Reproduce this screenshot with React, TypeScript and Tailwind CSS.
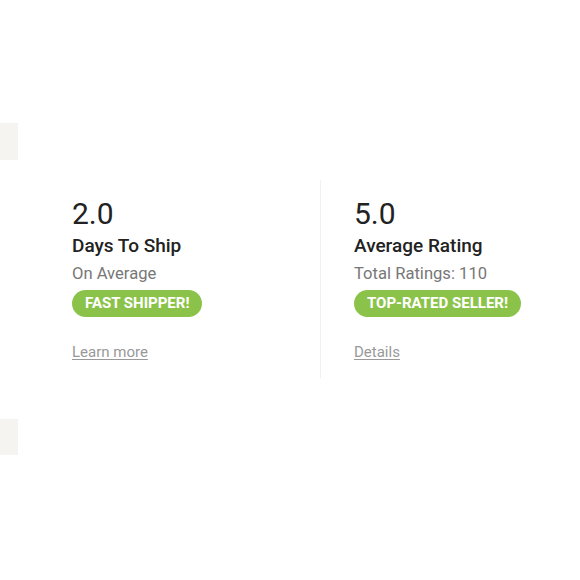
const stats = [
  {
    value: '2.0',
    title: 'Days To Ship',
    sub: 'On Average',
    badge: 'FAST SHIPPER!',
    link: 'Learn more',
  },
  {
    value: '5.0',
    title: 'Average Rating',
    sub: 'Total Ratings: 110',
    badge: 'TOP-RATED SELLER!',
    link: 'Details',
  },
]

function StatCard({ stat, divider }: { stat: (typeof stats)[number]; divider: boolean }) {
  return (
    <div
      className={
        'pt-4 pb-4 flex flex-col items-start ' +
        (divider ? 'pl-[33px] flex-1 border-l border-[#f1f1f1]' : 'pl-[34px] w-[282px] shrink-0')
      }
    >
      <div className="text-[30px] leading-[36px] text-[#222222]">{stat.value}</div>
      <div className="mt-[2px] text-[19px] leading-[24px] font-medium text-[#222222]">{stat.title}</div>
      <div className="mt-1 text-[16.6px] leading-[24px] text-[#777777]">{stat.sub}</div>
      <span className="mt-1 h-[27px] px-[13px] rounded-full bg-[#8bc34a] text-white text-[15px] font-bold leading-[27px]">
        {stat.badge}
      </span>
      <a href="#" className="mt-[25px] text-[15px] leading-[20px] text-[#999999] underline underline-offset-2">
        {stat.link}
      </a>
    </div>
  )
}

export default function App() {
  return (
    <div className="w-[580px] h-[580px] bg-white flex items-start font-['Roboto',sans-serif]">
      <div className="w-[18px] shrink-0 flex flex-col">
        <div className="mt-[123px] h-[37px] bg-[#f5f4f1]" />
        <div className="mt-[259px] h-[36px] bg-[#f5f4f1]" />
      </div>
      <div className="ml-5 mt-[180px] flex flex-1">
        {stats.map((s, i) => (
          <StatCard key={s.title} stat={s} divider={i > 0} />
        ))}
      </div>
    </div>
  )
}
